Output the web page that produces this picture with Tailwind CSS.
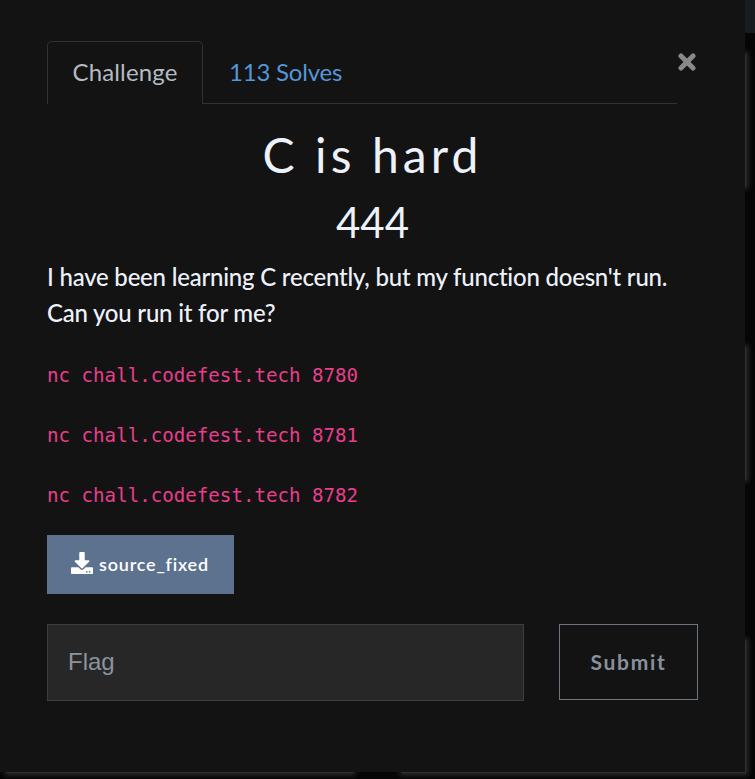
<!DOCTYPE html>
<html lang="en">
<head>
<meta charset="utf-8">
<title>Challenge</title>
<script src="https://cdn.jsdelivr.net/npm/@tailwindcss/browser@4"></script>
</head>
<body class="relative h-[779px] w-[755px] overflow-hidden bg-[#060606] font-['Lato',sans-serif] text-[#edf2fa]">
  <!-- Page behind the dialog -->
  <div class="absolute top-0 right-0 h-[33px] w-5 bg-[#181c1f]"></div>
  <div class="absolute top-[54px] left-[400px] h-[133px] w-[346px] bg-[#303030] shadow-[0_0_5px_2px_#303030]"></div>
  <div class="absolute top-[347px] left-[400px] h-[133px] w-[346px] bg-[#303030] shadow-[0_0_5px_2px_#303030]"></div>
  <div class="absolute top-[640px] left-[402px] h-[133px] w-[344px] bg-[#303030] shadow-[0_0_5px_2px_#303030]"></div>
  <div class="absolute top-[640px] left-[7px] h-[133px] w-[346px] bg-[#303030] shadow-[0_0_5px_2px_#303030]"></div>

  <main class="relative h-[772px] w-[745px] bg-[#131313] pt-[41px] pl-[47px]">
    <div class="flex">
      <nav class="flex h-[63px] w-[630px] text-2xl">
        <a class="flex w-[156px] justify-center rounded-t-[5px] border border-b-0 border-[#303235] pt-[14px] tracking-[0.15px] text-[#b4bbc2]">Challenge</a>
        <a class="flex-1 border-b border-[#303235] pt-[15px] pl-[26px] tracking-[-0.2px] text-[#5596d8]">113 Solves</a>
      </nav>
      <button class="mt-[12px] h-[18px] w-[20px]" aria-label="Close">
        <svg class="block h-[18px] w-[20px]" viewBox="0 0 20 18"><path d="M4 3 16 15M16 3 4 15" stroke="#898989" stroke-width="5" stroke-linecap="round"/></svg>
      </button>
    </div>
    <h2 class="mt-[22px] w-[651px] text-center text-[48px] leading-[58px] tracking-[4.1px]">C is hard</h2>
    <h3 class="mt-[12px] w-[651px] text-center text-[42px] leading-[52px]">444</h3>
    <p class="mt-[11px] w-[651px] text-2xl leading-9 font-medium tracking-[-0.22px] whitespace-nowrap">I have been learning C recently, but my function doesn't run.<br>Can you run it for me?</p>
    <div class="mt-[15px] flex flex-col font-['DejaVu_Sans_Mono',monospace] text-[19.15px] leading-[60px] text-[#e83e8c]">
      <code class="font-[inherit]">nc chall.codefest.tech 8780</code>
      <code class="font-[inherit]">nc chall.codefest.tech 8781</code>
      <code class="font-[inherit]">nc chall.codefest.tech 8782</code>
    </div>
    <a class="mt-[9px] flex h-[59px] w-[187px] items-center bg-[#5d728f] pl-6 text-lg font-semibold tracking-[0.8px] text-white">
      <svg class="mr-[6px] h-[22px] w-[22px] -translate-y-0.5" viewBox="0 0 512 512" fill="currentColor"><path d="M216 0h80c13.3 0 24 10.7 24 24v168h87.7c17.8 0 26.7 21.5 14.1 34.1L269.7 378.3c-7.5 7.5-19.8 7.5-27.3 0L90.1 226.1c-12.6-12.6-3.7-34.1 14.1-34.1H192V24c0-13.3 10.7-24 24-24zm296 376v112c0 13.3-10.7 24-24 24H24c-13.3 0-24-10.7-24-24V376c0-13.3 10.7-24 24-24h146.7l49 49c20.1 20.1 52.5 20.1 72.6 0l49-49H488c13.3 0 24 10.7 24 24zm-124 88c0-11-9-20-20-20s-20 9-20 20 9 20 20 20 20-9 20-20zm64 0c0-11-9-20-20-20s-20 9-20 20 9 20 20 20 20-9 20-20z"/></svg>
      <span class="-translate-y-px">source_fixed</span>
    </a>
    <form class="mt-[30px] flex items-start gap-[35px]">
      <input class="h-[77px] w-[477px] border border-[#3a3e42] bg-[#272727] px-5 pb-0.5 font-['Liberation_Sans',sans-serif] text-2xl placeholder:text-[#8b949e]" placeholder="Flag">
      <button type="button" class="h-[76px] w-[139px] border border-[#6c7681] text-[21px] font-bold tracking-[1.7px] text-[#88929b]">Submit</button>
    </form>
  </main>
</body>
</html>
